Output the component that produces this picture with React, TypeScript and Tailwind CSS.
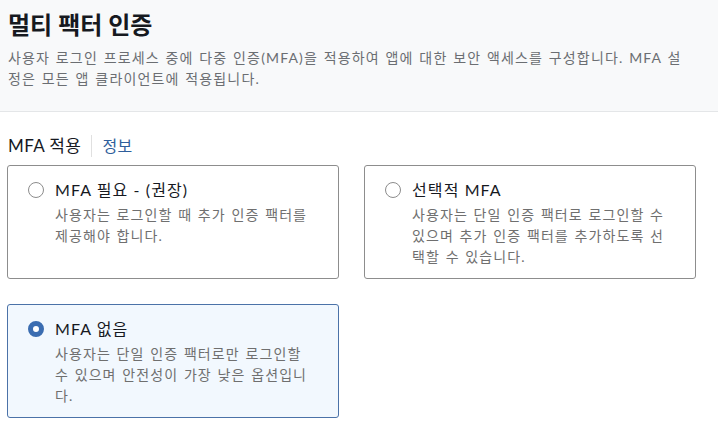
const options = [
  {
    id: "required",
    title: "MFA 필요 - (권장)",
    desc: "사용자는 로그인할 때 추가 인증 팩터를 제공해야 합니다.",
  },
  {
    id: "optional",
    title: "선택적 MFA",
    desc: "사용자는 단일 인증 팩터로 로그인할 수 있으며 추가 인증 팩터를 추가하도록 선택할 수 있습니다.",
  },
  {
    id: "off",
    title: "MFA 없음",
    desc: "사용자는 단일 인증 팩터로만 로그인할 수 있으며 안전성이 가장 낮은 옵션입니다.",
  },
];

const Radio = ({ checked }: { checked: boolean }) =>
  checked ? (
    <span className="mt-[3px] block h-[16px] w-[16px] shrink-0 rounded-full border-[5px] border-[#3b6db1] bg-white" />
  ) : (
    <span className="mt-[3px] block h-[16px] w-[16px] shrink-0 rounded-full border-[1.5px] border-[#8c8c8c] bg-white" />
  );

const OptionCard = ({
  title,
  desc,
  checked,
}: {
  title: string;
  desc: string;
  checked: boolean;
}) => (
  <div
    className={
      checked
        ? "flex h-[114px] w-[332px] gap-[11px] rounded-[3px] border border-[#4b72a8] bg-[#f2f8fe] pl-[20px] pr-[19px] pt-[13px]"
        : "flex h-[114px] w-[332px] gap-[11px] rounded-[3px] border border-[#8d8d8d] bg-white pl-[20px] pr-[19px] pt-[13px]"
    }
  >
    <Radio checked={checked} />
    <div className="flex min-w-0 flex-col">
      <span className="text-[16px] leading-[22px] tracking-[1.1px] text-[#16191f]">{title}</span>
      <span className="mt-[3px] text-[14px] leading-[21px] tracking-[1.1px] text-[#6f6f6f] [word-spacing:1px]">
        {desc}
      </span>
    </div>
  </div>
);

const App = () => {
  const selected = "off";
  return (
    <div
      className="min-h-screen bg-white"
      style={{ fontFamily: '"Lato", "Noto Sans CJK KR", sans-serif' }}
    >
      <header className="border-b border-[#e4e6e8] bg-[#f8f9fa] pb-[22px] pl-[8px] pr-[24px] pt-[8px]">
        <h1 className="text-[24px] font-semibold leading-[34px] text-[#16191f]">멀티 팩터 인증</h1>
        <p className="mt-[5px] text-[14px] leading-[21px] tracking-[1.15px] text-[#6b6e72] [word-spacing:1px]">
          사용자 로그인 프로세스 중에 다중 인증(MFA)을 적용하여 앱에 대한 보안 액세스를 구성합니다. MFA 설정은 모든 앱 클라이언트에 적용됩니다.
        </p>
      </header>

      <section className="px-[7px] pt-[22px]">
        <div className="flex items-center gap-[10px] pl-[1px]">
          <span className="text-[17px] leading-[24px] tracking-[0.4px] text-[#16191f]">MFA 적용</span>
          <span className="h-[22px] w-px bg-[#e0e0e0]" />
          <span className="text-[16px] leading-[24px] tracking-[0.5px] text-[#2f5e9b]">정보</span>
        </div>

        <div className="mt-[7px] grid w-[688px] grid-cols-[332px_332px] gap-x-[25px] gap-y-[25px]">
          {options.map((o) => (
            <OptionCard key={o.id} title={o.title} desc={o.desc} checked={o.id === selected} />
          ))}
        </div>
      </section>
    </div>
  );
};

export default App;
